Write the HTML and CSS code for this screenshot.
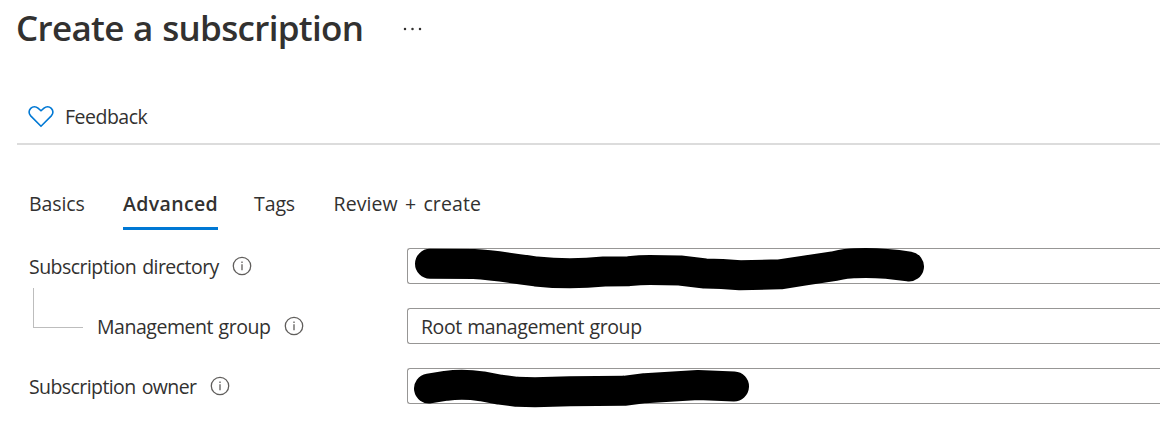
FILE: index.html
```html
<!DOCTYPE html>
<html lang="en">
<head>
<meta charset="utf-8">
<title>Create a subscription</title>
<link rel="stylesheet" href="styles.css">
</head>
<body>
<svg width="0" height="0" class="defs">
  <symbol id="info" viewBox="0 0 20 20">
    <circle cx="10" cy="10" r="8.7" fill="none" stroke="#605e5c" stroke-width="1.3"/>
    <path d="M10 8.3v5.9M10 5.4v1.5" stroke="#605e5c" stroke-width="1.3"/>
  </symbol>
</svg>
<main class="page">
  <header class="header">
    <h1 class="title">Create a subscription</h1>
    <svg class="more" width="20" height="4" viewBox="0 0 20 4" fill="#323130"><circle cx="2" cy="2" r="1.25"/><circle cx="9.5" cy="2" r="1.25"/><circle cx="17" cy="2" r="1.25"/></svg>
  </header>
  <div class="toolbar">
    <svg class="heart" width="26" height="22" viewBox="0 0 26 22" fill="none" stroke="#0078d4" stroke-width="1.6"><path d="M13 20.2 2.700 9.900C.5 7.600.6 4.300 2.700 2.300 4.900.3 8 .5 10 2.200L13 4.800l3-2.600c2-1.700 5.100-1.900 7.300.1 2.100 2 2.200 5.300 0 7.600z"/></svg>
    <span class="feedback">Feedback</span>
  </div>
  <nav class="tabs">
    <a class="tab basics">Basics</a>
    <a class="tab active">Advanced</a>
    <a class="tab tags">Tags</a>
    <a class="tab review">Review + create</a>
  </nav>
  <form class="form">
    <div class="row">
      <div class="label"><span class="directory">Subscription directory</span><svg class="info"><use href="#info"/></svg></div>
      <div class="field">
        <svg class="redaction" width="530" height="50" viewBox="407 242 530 50"><path d="M430 263.800L474 264C493 265.200 513 268 536 271.500Q553 273.300 570 273.300Q587 273 604 271.500L629 271.200Q640 270 650 270L680 270.500L705 273.500L722 274L740 275.300L780 274.300L805 270.500L835 266Q848 263 855 263.200Q880 262 909 266.500"/></svg>
      </div>
    </div>
    <div class="row">
      <div class="label child"><span class="branch"></span><span class="group">Management group</span><svg class="info"><use href="#info"/></svg></div>
      <div class="field"><span class="value">Root management group</span></div>
    </div>
    <div class="row">
      <div class="label"><span class="owner">Subscription owner</span><svg class="info"><use href="#info"/></svg></div>
      <div class="field">
        <svg class="redaction" width="530" height="50" viewBox="407 362 530 50"><path d="M429 388.500L446 385.800Q463 383.500 482 386.300L500 389.700L517 391.800L535 392.300L570 391.300L624 390.800L645 388.200L698 385L734 386.500"/></svg>
      </div>
    </div>
  </form>
</main>
</body>
</html>
```
FILE: styles.css
```css
* { box-sizing: border-box; }
body {
  margin: 0;
  min-height: 428px;
  background: #fff;
  color: #323130;
  font: 19.5px/28px "Open Sans", sans-serif;
}
.defs { display: block; }
.page { width: 1160px; min-height: 428px; padding-left: 17px; }
.header { display: flex; align-items: center; height: 57px; }
.title { margin: 0 0 0 -1px; width: 387px; padding-bottom: 2px; font-size: 35px; font-weight: 600; line-height: 55px; letter-spacing: -0.68px; word-spacing: 1px; white-space: nowrap; }
.toolbar { display: flex; align-items: center; height: 88px; padding: 33px 0 0 11px; border-bottom: 2px solid #dcdcdc; }
.heart { margin-right: 11px; }
.feedback { letter-spacing: -0.5px; }
.tabs { display: flex; height: 85px; margin-left: 12px; padding-top: 45px; white-space: nowrap; }
.tab { height: 39.5px; }
.basics { width: 94px; letter-spacing: -0.1px; }
.active { width: 95px; margin-right: 36px; font-weight: 600; letter-spacing: 0.35px; border-bottom: 3px solid #0078d4; }
.tags { width: 80px; letter-spacing: -0.1px; }
.review { margin-left: -0.5px; letter-spacing: 0.1px; word-spacing: 2px; }
.form { display: grid; gap: 24px; margin: 18px 0 0 12px; }
.row { display: flex; height: 36px; }
.label { display: flex; align-items: center; width: 378px; padding-top: 1px; white-space: nowrap; }
.directory { letter-spacing: -0.54px; word-spacing: 1.5px; }
.owner { letter-spacing: -0.58px; word-spacing: 1.5px; }
.group { letter-spacing: -0.47px; word-spacing: 1px; }
.value { letter-spacing: -0.42px; word-spacing: 0.8px; }
.info { width: 20px; height: 20px; margin: 0 0 1px 13.5px; }
.branch { width: 50px; height: 40px; margin: -38px 14px 0 4px; border: solid #bdbdbd; border-width: 0 0 1px 1px; }
.field { position: relative; flex: 1; padding: 4px 13px; border: 1px solid #979695; border-right: 0; border-radius: 3px 0 0 3px; }
.redaction { position: absolute; left: -1px; top: -7px; fill: none; stroke: #000; stroke-width: 30; stroke-linecap: round; stroke-linejoin: round; }
```
